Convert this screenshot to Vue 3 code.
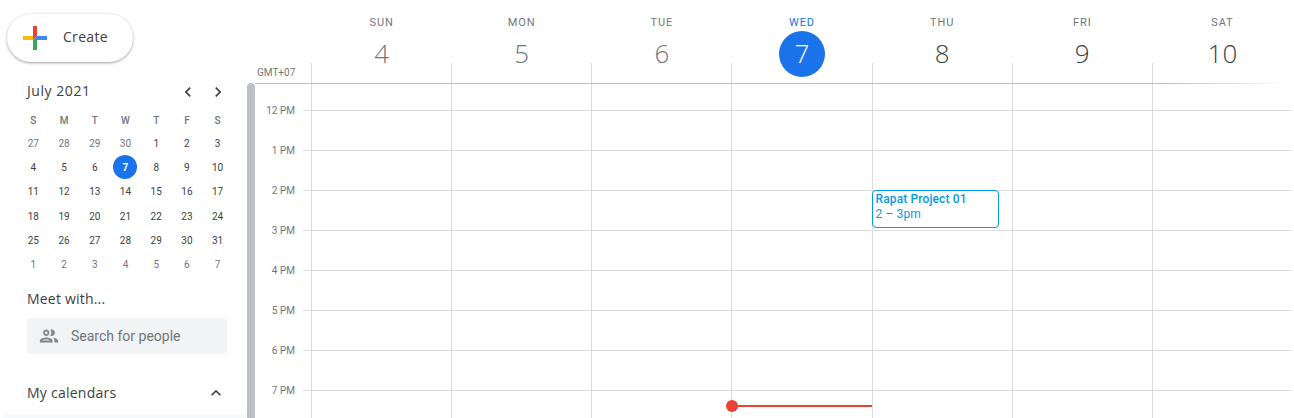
<script setup>
const days = [
  { name: 'SUN', num: 4, past: true },
  { name: 'MON', num: 5, past: true },
  { name: 'TUE', num: 6, past: true },
  { name: 'WED', num: 7, today: true },
  { name: 'THU', num: 8 },
  { name: 'FRI', num: 9 },
  { name: 'SAT', num: 10 }
]

const hours = ['12 PM', '1 PM', '2 PM', '3 PM', '4 PM', '5 PM', '6 PM', '7 PM', '']

const miniHead = ['S', 'M', 'T', 'W', 'T', 'F', 'S']

const miniDays = []
for (const d of [27, 28, 29, 30]) miniDays.push({ d, off: true })
for (let d = 1; d <= 31; d++) miniDays.push({ d, today: d === 7 })
for (let d = 1; d <= 7; d++) miniDays.push({ d, off: true })
</script>

<template>
  <div class="page">
    <aside class="side">
      <div class="side-inner">
        <button class="create">
          <svg width="24" height="24" viewBox="0 0 24 24">
            <rect x="10" y="0" width="4" height="10" fill="#ea4335" />
            <rect x="14" y="10" width="10" height="4" fill="#4285f4" />
            <rect x="10" y="14" width="4" height="10" fill="#34a853" />
            <rect x="0" y="10" width="10" height="4" fill="#fbbc04" />
            <path d="M10 10h4L10 14z" fill="#ea4335" />
            <path d="M14 10v4h-4z" fill="#4285f4" />
          </svg>
          <span class="create-text">Create</span>
        </button>

        <div class="mini">
          <div class="mini-top">
            <span class="mini-title">July 2021</span>
            <svg class="nav" width="20" height="20" viewBox="0 0 24 24"><path d="M15.4 7.4 14 6l-6 6 6 6 1.4-1.4L10.8 12z" /></svg>
            <svg class="nav" width="20" height="20" viewBox="0 0 24 24"><path d="M8.6 7.4 10 6l6 6-6 6-1.4-1.4L13.2 12z" /></svg>
          </div>
          <div class="mini-grid mini-head">
            <span v-for="(h, i) in miniHead" :key="i">{{ h }}</span>
          </div>
          <div class="mini-grid">
            <span
              v-for="(m, i) in miniDays"
              :key="i"
              class="mini-day"
              :class="{ off: m.off, today: m.today }"
            >{{ m.d }}</span>
          </div>
        </div>

        <div class="meet">Meet with...</div>
        <div class="search">
          <svg width="22" height="22" viewBox="0 0 24 24" fill="#80868b">
            <path d="M9 13.75c-2.34 0-7 1.17-7 3.5V19h14v-1.75c0-2.33-4.66-3.5-7-3.5zM4.34 17c.84-.58 2.87-1.25 4.66-1.25s3.82.67 4.66 1.25H4.34zM9 12c1.93 0 3.5-1.57 3.5-3.5S10.93 5 9 5 5.5 6.57 5.5 8.5 7.07 12 9 12zm0-5c.83 0 1.5.67 1.5 1.5S9.83 10 9 10s-1.5-.67-1.5-1.5S8.17 7 9 7zm7.04 6.81c1.16.84 1.96 1.96 1.96 3.44V19h4v-1.75c0-2.02-3.5-3.17-5.96-3.44zM15 12c1.93 0 3.5-1.57 3.5-3.5S16.93 5 15 5c-.54 0-1.04.13-1.5.35.63.89 1 1.98 1 3.15s-.37 2.26-1 3.15c.46.22.96.35 1.5.35z" />
          </svg>
          <span>Search for people</span>
        </div>

        <div class="my-cal">
          <span>My calendars</span>
          <svg width="20" height="20" viewBox="0 0 24 24" fill="#3c4043"><path d="M7.4 15.4 6 14l6-6 6 6-1.4 1.4L12 10.8z" /></svg>
        </div>
        <div class="side-foot"></div>
      </div>
      <div class="thumb"></div>
    </aside>

    <main class="cal">
      <div class="head">
        <div class="gmt">GMT+07</div>
        <div v-for="day in days" :key="day.name" class="head-day" :class="{ past: day.past, today: day.today }">
          <span class="head-name">{{ day.name }}</span>
          <span class="head-num">{{ day.num }}</span>
        </div>
      </div>

      <div v-for="(h, r) in hours" :key="r" class="row" :class="{ 'row-first': r === 0 }">
        <div class="time"><span v-if="r < 8">{{ h }}</span></div>
        <div class="tick" :class="{ 'tick-none': r === 8 }"></div>
        <div v-for="c in 7" :key="c" class="cell" :class="{ 'cell-end': r === 8 }">
          <div v-if="r === 3 && c === 5" class="event">
            <div class="event-title">Rapat Project 01</div>
            <div>2 – 3pm</div>
          </div>
          <div v-if="r === 8 && c === 4" class="now"></div>
        </div>
      </div>
    </main>
  </div>
</template>

<style scoped>
.page {
  display: flex;
  width: 1294px;
  height: 418px;
  overflow: hidden;
  background: #fff;
  font-family: Roboto, "Liberation Sans", sans-serif;
  color: #3c4043;
}

.side {
  display: flex;
  flex: 0 0 255px;
}

.side-inner {
  display: flex;
  flex-direction: column;
  width: 247px;
  height: 418px;
}

.thumb {
  width: 8px;
  margin-top: 83px;
  background: #bdc1c6;
  border-radius: 4px 4px 0 0;
}

.create {
  display: flex;
  align-items: center;
  gap: 16px;
  width: 126px;
  height: 48px;
  margin: 14px 0 0 7px;
  padding: 0 0 0 16px;
  border: 0;
  border-radius: 24px;
  background: #fff;
  box-shadow: 0 1px 2px 0 rgba(60, 64, 67, .3), 0 1px 3px 1px rgba(60, 64, 67, .15);
  font-family: "Open Sans", sans-serif;
  font-size: 14px;
  font-weight: 500;
  letter-spacing: .3px;
  color: #3c4043;
}

.create-text {
  margin-top: -3px;
}

.mini {
  margin: 18px 0 0 18px;
  width: 215px;
}

.mini-top {
  display: flex;
  align-items: center;
  height: 22px;
  padding-left: 9px;
  margin-bottom: 11px;
}

.mini-title {
  flex: 1;
  margin-top: -1px;
  font-family: "Open Sans", sans-serif;
  font-size: 14px;
  font-weight: 500;
  letter-spacing: .55px;
  color: #3c4043;
}

.nav {
  fill: #3c4043;
  margin: 1px 5px 0;
}

.mini-grid {
  display: grid;
  grid-template-columns: repeat(7, 1fr);
  grid-auto-rows: 24.3px;
  font-size: 10px;
  text-align: center;
}

.mini-grid span {
  display: flex;
  align-items: center;
  justify-content: center;
}

.mini-head {
  grid-auto-rows: 15px;
  margin-bottom: 3px;
  font-weight: 500;
  color: #70757a;
}

.mini-day {
  font-weight: 400;
}

.mini-day.off {
  color: #70757a;
}

.mini-day.today {
  width: 24px;
  height: 24px;
  margin: 0 auto;
  border-radius: 50%;
  background: #1a73e8;
  color: #fff;
  font-weight: 700;
}

.meet {
  margin: 12px 0 0 27px;
  font-family: "Open Sans", sans-serif;
  font-size: 14px;
  font-weight: 500;
  letter-spacing: .2px;
  line-height: 20px;
}

.search {
  display: flex;
  align-items: center;
  gap: 11px;
  width: 200px;
  height: 36px;
  box-sizing: border-box;
  margin: 9px 0 0 27px;
  padding-left: 11px;
  border-radius: 4px;
  background: #f1f3f4;
  font-size: 14px;
  color: #70757a;
}

.my-cal {
  display: flex;
  align-items: center;
  justify-content: space-between;
  margin: 28px 0 0 27px;
  padding-right: 21px;
  height: 22px;
  font-family: "Open Sans", sans-serif;
  font-size: 14px;
  font-weight: 500;
  letter-spacing: .25px;
}

.side-foot {
  margin-top: auto;
  margin-left: 3px;
  height: 4px;
  background: #f8f9fa;
}

.cal {
  flex: 1;
  min-width: 0;
  padding-right: 2px;
}

.head {
  position: relative;
  display: flex;
  height: 84px;
  box-sizing: border-box;
  padding-left: 56px;
  margin-right: -2px;
  padding-right: 2px;
}

.head::after {
  content: "";
  position: absolute;
  left: 0;
  right: 4px;
  bottom: 0;
  height: 1px;
  background: linear-gradient(to right, #bdbdbd 0, #bdbdbd 88%, #fff 100%);
}

.gmt {
  position: absolute;
  left: 2px;
  top: 67px;
  font-size: 10px;
  line-height: 12px;
  color: #70757a;
}

.head-day {
  position: relative;
  flex: 1 1 0;
  display: flex;
  flex-direction: column;
  align-items: center;
  padding: 16px 0 0 1px;
}

.head-day::before {
  content: "";
  position: absolute;
  left: 0;
  top: 63px;
  bottom: 0;
  width: 1px;
  background: #dadce0;
}

.head-name {
  height: 13px;
  font-size: 11px;
  line-height: 13px;
  font-weight: 400;
  letter-spacing: .9px;
  color: #70757a;
}

.head-num {
  position: relative;
  display: flex;
  align-items: center;
  justify-content: center;
  width: 46px;
  height: 46px;
  margin-top: 2px;
  padding-bottom: 2px;
  box-sizing: border-box;
  border-radius: 50%;
  font-family: "Open Sans", sans-serif;
  font-size: 26px;
  font-weight: 350;
  color: #3c4043;
}

.past .head-num {
  color: #70757a;
}

.today .head-name {
  color: #1a73e8;
}

.today .head-num {
  background: #1a73e8;
  color: #fff;
}

.row {
  display: flex;
  height: 40px;
}

.row-first {
  height: 27px;
}

.time {
  display: flex;
  align-items: flex-end;
  justify-content: flex-end;
  width: 40px;
  font-size: 10px;
  color: #70757a;
  line-height: 12px;
}

.time span {
  margin-bottom: -6px;
}

.tick {
  width: 8px;
  margin-left: 8px;
  box-sizing: border-box;
  border-bottom: 1px solid #dadce0;
}

.tick-none {
  border-bottom: 0;
}

.cell {
  position: relative;
  flex: 1 1 0;
  box-sizing: border-box;
  border-left: 1px solid #dadce0;
  border-bottom: 1px solid #dadce0;
}

.cell-end {
  border-bottom: 0;
}

.event {
  position: absolute;
  left: -1px;
  top: -1px;
  z-index: 2;
  width: 127px;
  height: 38px;
  box-sizing: border-box;
  padding: 1px 0 0 3px;
  border: 1px solid #039be5;
  border-radius: 4px;
  background: #fff;
  font-size: 12px;
  line-height: 15px;
  letter-spacing: .12px;
  color: #039be5;
}

.event-title {
  font-weight: 500;
}

.now {
  position: absolute;
  left: 0;
  right: 0;
  top: 14px;
  height: 2px;
  background: #ea4335;
}

.now::before {
  content: "";
  position: absolute;
  left: -6px;
  top: -5px;
  width: 12px;
  height: 12px;
  border-radius: 50%;
  background: #ea4335;
}
</style>
